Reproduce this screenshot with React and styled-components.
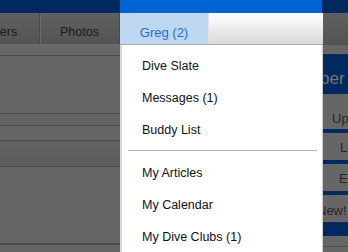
import React from "react";
import styled, { createGlobalStyle } from "styled-components";

const Global = createGlobalStyle`
  html, body { margin: 0; padding: 0; }
  body {
    width: 348px;
    height: 252px;
    overflow: hidden;
    background: #666666;
    font-family: "Liberation Sans", Arial, sans-serif;
  }
`;

const MID = 203;
const LEFT = 120;

const Page = styled.div`
  display: flex;
  flex-direction: column;
  width: 348px;
  height: 252px;
  overflow: hidden;
`;

const TopBar = styled.div`
  display: flex;
  height: 14px;
`;

const TopSeg = styled.div`
  flex: ${(p) => (p.$w ? `0 0 ${p.$w}px` : "1 1 auto")};
  background: ${(p) => (p.$blue ? "#0063d3" : "#00295f")};
`;

const NavRow = styled.div`
  display: flex;
  height: 34px;
`;

const NavLeft = styled.div`
  flex: 0 0 ${LEFT}px;
  overflow: hidden;
  background: linear-gradient(#606060, #535353);
  border-bottom: 1px solid #6a6a6a;
  box-sizing: border-box;
`;

const NavTabs = styled.div`
  display: flex;
  margin-left: -40px;
  height: 100%;
`;

const NavTab = styled.div`
  flex: 0 0 80px;
  display: flex;
  align-items: center;
  justify-content: center;
  padding-top: 7px;
  box-sizing: border-box;
  border-right: 1px solid #4a4a4a;
  box-shadow: inset 1px 0 0 #6a6a6a;
  font-size: 12.5px;
  color: #1b1b1b;
`;

const UserNav = styled.div`
  flex: 0 0 ${MID}px;
  display: flex;
  border-bottom: 1px solid #a9a9a9;
  box-sizing: border-box;
`;

const UserTab = styled.div`
  flex: 0 0 89px;
  display: flex;
  align-items: center;
  justify-content: center;
  padding-top: 9px;
  box-sizing: border-box;
  background: #bdd7f1;
  border-right: 1px solid #e2e2e2;
  font-size: 13px;
  color: #1d6ddd;
`;

const UserFill = styled.div`
  flex: 1 1 auto;
  background: linear-gradient(#ffffff, #dadada);
`;

const NavRight = styled.div`
  flex: 1 1 auto;
  background: linear-gradient(#606060, #535353);
  border-bottom: 1px solid #4f4f4f;
  box-sizing: border-box;
`;

const Body = styled.div`
  display: flex;
  flex: 1 1 auto;
  min-height: 0;
`;

const LeftContent = styled.div`
  flex: 0 0 ${LEFT}px;
  display: flex;
  flex-direction: column;
`;

const Band = styled.div`
  flex: ${(p) => (p.$h ? `0 0 ${p.$h}px` : "1 1 auto")};
  background: ${(p) => p.$bg || "#666666"};
  border-bottom: ${(p) => (p.$line ? `${p.$line}px solid #4a4a4a` : "none")};
`;

const Menu = styled.div`
  flex: 0 0 ${MID}px;
  box-sizing: border-box;
  background: #ffffff;
  border-left: 2px solid #d9d9d9;
  border-right: 1px solid #cfcfcf;
  padding-top: 5px;
  display: flex;
  flex-direction: column;
`;

const MenuItem = styled.div`
  flex: 0 0 32px;
  display: flex;
  align-items: center;
  padding-left: 20px;
  padding-top: 1px;
  box-sizing: border-box;
  font-size: 12.5px;
  color: #111111;
  white-space: nowrap;
`;

const MenuSep = styled.div`
  flex: 0 0 1px;
  background: #b4b4b4;
  margin: 4px 5px 6px 6px;
`;

const RightCol = styled.div`
  flex: 1 1 auto;
  display: flex;
  flex-direction: column;
  overflow: hidden;
  background: #666666;
`;

const RightGap = styled.div`
  flex: 0 0 ${(p) => p.$h}px;
  background: #666666;
  border-bottom: ${(p) => (p.$line ? "1px solid #4a4a4a" : "none")};
`;

const HeaderBox = styled.div`
  flex: 0 0 40px;
  display: flex;
  align-items: center;
  background: #00295f;
  color: #767676;
  font-size: 17px;
  padding-top: 11px;
  box-sizing: border-box;
  white-space: nowrap;
  text-indent: -3px;
`;

const SideButton = styled.div`
  flex: 0 0 ${(p) => p.$h}px;
  display: flex;
  align-items: center;
  padding-top: ${(p) => p.$pt || 0}px;
  box-sizing: border-box;
  white-space: nowrap;
  font-size: 13px;
  color: #262626;
  text-indent: ${(p) => p.$indent}px;
`;

const NavyBar = styled.div`
  flex: 0 0 ${(p) => p.$h}px;
  background: #00295f;
`;

const menuTop = ["Dive Slate", "Messages (1)", "Buddy List"];
const menuBottom = ["My Articles", "My Calendar", "My Dive Clubs (1)"];

export default function App() {
  return (
    <>
      <Global />
      <Page>
        <TopBar>
          <TopSeg $w={LEFT} />
          <TopSeg $w={MID - 1} $blue />
          <TopSeg />
        </TopBar>
        <NavRow>
          <NavLeft>
            <NavTabs>
              <NavTab>Divers</NavTab>
              <NavTab>Photos</NavTab>
            </NavTabs>
          </NavLeft>
          <UserNav>
            <UserTab>Greg (2)</UserTab>
            <UserFill />
          </UserNav>
          <NavRight />
        </NavRow>
        <Body>
          <LeftContent>
            <Band $h={10} $bg="#686868" $line={1} />
            <Band $h={57} $line={1} />
            <Band $h={11} $bg="#636363" $line={1} />
            <Band $h={14} $line={1} />
            <Band $h={25} $bg="linear-gradient(#616161, #5b5b5b)" $line={1} />
            <Band $h={76} $line={2} />
            <Band />
          </LeftContent>
          <Menu>
            {menuTop.map((t) => (
              <MenuItem key={t}>{t}</MenuItem>
            ))}
            <MenuSep />
            {menuBottom.map((t) => (
              <MenuItem key={t}>{t}</MenuItem>
            ))}
          </Menu>
          <RightCol>
            <RightGap $h={9} />
            <HeaderBox>per</HeaderBox>
            <SideButton $h={35} $pt={14} $indent={9}>Update</SideButton>
            <NavyBar $h={4} />
            <SideButton $h={27} $pt={2} $indent={17}>Login</SideButton>
            <NavyBar $h={4} />
            <SideButton $h={27} $pt={2} $indent={16}>Edit</SideButton>
            <NavyBar $h={4} />
            <SideButton $h={27} $pt={4} $indent={-6}>New!</SideButton>
            <NavyBar $h={14} />
            <RightGap $h={10} $line />
            <RightGap $h={20} />
          </RightCol>
        </Body>
      </Page>
    </>
  );
}
